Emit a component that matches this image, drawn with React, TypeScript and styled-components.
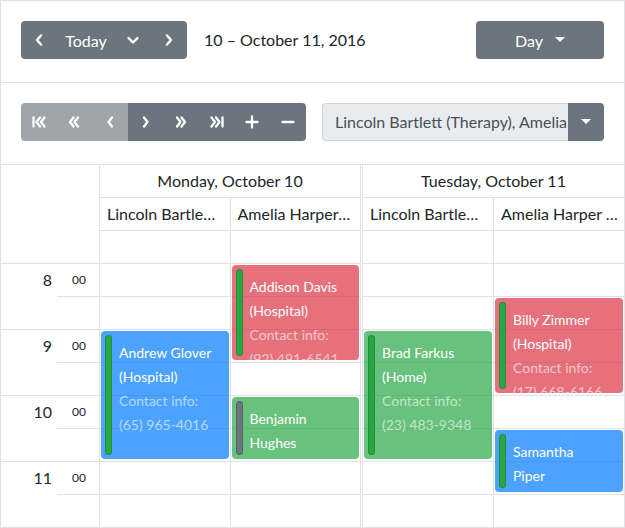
import React from 'react'
import styled, { createGlobalStyle } from 'styled-components'

const LINE = '#dee2e6'
const SLOT = 33
const START_HOUR = 8

const GlobalStyle = createGlobalStyle`
  body {
    margin: 0;
    font-family: Lato, "Open Sans", sans-serif;
    color: #212529;
    background: #fff;
  }
`

const Frame = styled.div`
  width: 625px;
  height: 528px;
  box-sizing: border-box;
  border: 1px solid ${LINE};
  overflow: hidden;
`

const Toolbar = styled.div`
  display: flex;
  justify-content: space-between;
  align-items: flex-start;
  height: 82px;
  box-sizing: border-box;
  padding: 20px 20px 0;
  border-bottom: 1px solid ${LINE};
`

const ToolbarSide = styled.div`
  display: flex;
  align-items: center;
`

const ButtonGroup = styled.div`
  display: flex;
  border-radius: 4px;
  overflow: hidden;
`

const Button = styled.button<{ $w: number; $disabled?: boolean }>`
  width: ${p => p.$w}px;
  height: 38px;
  padding: 0;
  border: none;
  background: #6c757d;
  color: #fff;
  opacity: ${p => (p.$disabled ? 0.65 : 1)};
  display: flex;
  align-items: center;
  justify-content: center;
  font-family: inherit;
  font-size: 16px;
`

const DateLabel = styled.span`
  margin-left: 17px;
  font-size: 16px;
  line-height: 38px;
`

const ViewButton = styled.button`
  width: 128px;
  height: 38px;
  border: none;
  border-radius: 4px;
  background: #6c757d;
  color: #fff;
  display: flex;
  align-items: center;
  justify-content: center;
  gap: 12px;
  font-family: inherit;
  font-size: 16px;
  padding: 0;
`

const Select = styled.div`
  display: flex;
  width: 282px;
  height: 38px;
`

const SelectField = styled.div`
  flex: 1;
  min-width: 0;
  box-sizing: border-box;
  background: #e9ecef;
  border: 1px solid #ced4da;
  border-right: none;
  border-radius: 4px 0 0 4px;
  padding: 0 12px;
  font-size: 16px;
  line-height: 36px;
  color: #495057;
  white-space: nowrap;
  overflow: hidden;
`

const SelectToggle = styled.div`
  width: 36px;
  background: #6c757d;
  border-radius: 0 4px 4px 0;
  display: flex;
  align-items: center;
  justify-content: center;
`

const Schedule = styled.div`
  display: flex;
`

const TimeColumn = styled.div`
  width: 99px;
  flex: none;
  box-sizing: border-box;
  border-right: 1px solid ${LINE};
`

const TimeHeader = styled.div`
  height: 99px;
  box-sizing: border-box;
  border-bottom: 1px solid ${LINE};
`

const HourRow = styled.div`
  display: flex;
  height: 66px;
  box-sizing: border-box;
  border-bottom: 1px solid ${LINE};
`

const HourLabel = styled.div`
  width: 56px;
  box-sizing: border-box;
  padding-right: 5px;
  text-align: right;
  font-size: 16px;
  line-height: 32px;
`

const HalfHours = styled.div`
  flex: 1;
`

const HalfHour = styled.div<{ $line?: boolean }>`
  height: 33px;
  box-sizing: border-box;
  border-bottom: ${p => (p.$line ? `1px solid ${LINE}` : 'none')};
  padding-left: 15px;
  font-size: 12px;
  line-height: 32px;
`

const DayGroup = styled.div<{ $first?: boolean }>`
  box-sizing: border-box;
  min-width: 0;
  ${p =>
    p.$first
      ? `flex: none; width: 261px; border-right: 1px solid ${LINE};`
      : `flex: 1; margin-left: 1px; border-left: 1px solid ${LINE};`}
`

const DayTitle = styled.div`
  height: 33px;
  box-sizing: border-box;
  border-bottom: 1px solid ${LINE};
  text-align: center;
  font-size: 16px;
  line-height: 32px;
`

const Row = styled.div`
  display: flex;
  height: 33px;
  box-sizing: border-box;
  border-bottom: 1px solid ${LINE};
`

const Cell = styled.div<{ $divider?: boolean }>`
  flex: 1 1 0;
  min-width: 0;
  padding: 0 6px 0 7px;
  border-left: ${p => (p.$divider ? `1px solid ${LINE}` : 'none')};
  font-size: 16px;
  line-height: 32px;
  white-space: nowrap;
  overflow: hidden;
  text-overflow: ellipsis;
`

const Body = styled.div`
  display: flex;
`

const ResourceColumn = styled.div<{ $divider?: boolean }>`
  flex: 1 1 0;
  min-width: 0;
  position: relative;
  border-left: ${p => (p.$divider ? `1px solid ${LINE}` : 'none')};
`

const Slot = styled.div`
  height: 33px;
  box-sizing: border-box;
  border-bottom: 1px solid ${LINE};
`

const Appointment = styled.div<{ $bg: string }>`
  position: absolute;
  left: 1px;
  right: 1px;
  box-sizing: border-box;
  padding: 10px 6px 0 18px;
  border-radius: 4px;
  background: ${p => p.$bg};
  overflow: hidden;
  font-size: 14px;
  line-height: 24px;
`

const Bar = styled.div<{ $color: string }>`
  position: absolute;
  left: 4px;
  top: 4px;
  bottom: 4px;
  width: 7px;
  box-sizing: border-box;
  border-radius: 4px;
  background: ${p => p.$color};
  border: 1px solid rgba(0, 0, 0, 0.15);
`

const TitleLine = styled.div`
  color: #fff;
  white-space: nowrap;
`

const InfoLine = styled.div`
  color: rgba(255, 255, 255, 0.6);
  white-space: nowrap;
`

const Chevron = ({ dir }: { dir: 'left' | 'right' | 'down' }) => {
  const d =
    dir === 'left' ? 'M10 3.5 L6 8 L10 12.5' : dir === 'right' ? 'M6 3.5 L10 8 L6 12.5' : 'M3.5 6 L8 10.5 L12.5 6'
  return (
    <svg width="16" height="16" viewBox="0 0 16 16">
      <path d={d} fill="none" stroke="#fff" strokeWidth="2.4" strokeLinecap="round" strokeLinejoin="round" />
    </svg>
  )
}

const NavIcon = ({ d }: { d: string }) => (
  <svg width="16" height="16" viewBox="0 0 16 16">
    <path d={d} fill="none" stroke="#fff" strokeWidth="2.3" strokeLinecap="round" strokeLinejoin="round" />
  </svg>
)

const Caret = () => (
  <svg width="10" height="6" viewBox="0 0 10 6">
    <polygon points="0,0 10,0 5,5" fill="#fff" />
  </svg>
)

const navIcons = [
  { d: 'M2.5 3.5 V12.5 M9 3.5 L5.5 8 L9 12.5 M13.5 3.5 L10 8 L13.5 12.5', disabled: true },
  { d: 'M7.5 3.5 L4 8 L7.5 12.5 M12 3.5 L8.5 8 L12 12.5', disabled: true },
  { d: 'M10 3.5 L6.5 8 L10 12.5', disabled: true },
  { d: 'M6 3.5 L9.5 8 L6 12.5' },
  { d: 'M4 3.5 L7.5 8 L4 12.5 M8.5 3.5 L12 8 L8.5 12.5' },
  { d: 'M2.5 3.5 L6 8 L2.5 12.5 M7 3.5 L10.5 8 L7 12.5 M13.5 3.5 V12.5' },
  { d: 'M8 2.5 V13.5 M2.5 8 H13.5' },
  { d: 'M2.5 8 H13.5' },
]

const days = ['Monday, October 10', 'Tuesday, October 11']
const resources = ['Lincoln Bartlett (Therapy)', 'Amelia Harper (Hospital)']
const hours = [8, 9, 10, 11]

const BLUE = 'rgba(0, 123, 255, 0.7)'
const RED = 'rgba(220, 53, 69, 0.7)'
const GREEN = 'rgba(40, 167, 69, 0.7)'

type Appt = {
  day: number
  res: number
  start: number
  end: number
  bg: string
  bar: string
  title: string[]
  info?: string[]
}

const appointments: Appt[] = [
  { day: 0, res: 0, start: 9, end: 11, bg: BLUE, bar: '#28a745', title: ['Andrew Glover', '(Hospital)'], info: ['Contact info:', '(65) 965-4016'] },
  { day: 0, res: 1, start: 8, end: 9.5, bg: RED, bar: '#28a745', title: ['Addison Davis', '(Hospital)'], info: ['Contact info:', '(92) 491-6541'] },
  { day: 0, res: 1, start: 10, end: 11, bg: GREEN, bar: '#6c757d', title: ['Benjamin', 'Hughes'] },
  { day: 1, res: 0, start: 9, end: 11, bg: GREEN, bar: '#28a745', title: ['Brad Farkus', '(Home)'], info: ['Contact info:', '(23) 483-9348'] },
  { day: 1, res: 1, start: 8.5, end: 10, bg: RED, bar: '#28a745', title: ['Billy Zimmer', '(Hospital)'], info: ['Contact info:', '(17) 668-6166'] },
  { day: 1, res: 1, start: 10.5, end: 11.5, bg: BLUE, bar: '#28a745', title: ['Samantha', 'Piper'] },
]

export default function App() {
  return (
    <>
      <GlobalStyle />
      <Frame>
        <Toolbar>
          <ToolbarSide>
            <ButtonGroup>
              <Button $w={36}><Chevron dir="left" /></Button>
              <Button $w={58}>Today</Button>
              <Button $w={36}><Chevron dir="down" /></Button>
              <Button $w={36}><Chevron dir="right" /></Button>
            </ButtonGroup>
            <DateLabel>10 – October 11, 2016</DateLabel>
          </ToolbarSide>
          <ViewButton>
            Day
            <Caret />
          </ViewButton>
        </Toolbar>

        <Toolbar>
          <ButtonGroup>
            {navIcons.map((icon, i) => (
              <Button key={i} $w={35.6} $disabled={icon.disabled}>
                <NavIcon d={icon.d} />
              </Button>
            ))}
          </ButtonGroup>
          <Select>
            <SelectField>Lincoln Bartlett (Therapy), Amelia Harper (Hospital)</SelectField>
            <SelectToggle><Caret /></SelectToggle>
          </Select>
        </Toolbar>

        <Schedule>
          <TimeColumn>
            <TimeHeader />
            {hours.map(h => (
              <HourRow key={h}>
                <HourLabel>{h}</HourLabel>
                <HalfHours>
                  <HalfHour $line>00</HalfHour>
                  <HalfHour />
                </HalfHours>
              </HourRow>
            ))}
          </TimeColumn>

          {days.map((day, di) => (
            <DayGroup key={day} $first={di === 0}>
              <DayTitle>{day}</DayTitle>
              <Row>
                {resources.map((r, ri) => (
                  <Cell key={r} $divider={ri > 0}>{r}</Cell>
                ))}
              </Row>
              <Row>
                {resources.map((r, ri) => (
                  <Cell key={r} $divider={ri > 0} />
                ))}
              </Row>
              <Body>
                {resources.map((r, ri) => (
                  <ResourceColumn key={r} $divider={ri > 0}>
                    {Array.from({ length: hours.length * 2 }, (_, si) => (
                      <Slot key={si} />
                    ))}
                    {appointments
                      .filter(a => a.day === di && a.res === ri)
                      .map(a => (
                        <Appointment
                          key={a.title.join(' ')}
                          $bg={a.bg}
                          style={{
                            top: (a.start - START_HOUR) * 2 * SLOT + 1,
                            height: (a.end - a.start) * 2 * SLOT - 4,
                          }}
                        >
                          <Bar $color={a.bar} />
                          {a.title.map(t => (
                            <TitleLine key={t}>{t}</TitleLine>
                          ))}
                          {a.info?.map(t => (
                            <InfoLine key={t}>{t}</InfoLine>
                          ))}
                        </Appointment>
                      ))}
                  </ResourceColumn>
                ))}
              </Body>
            </DayGroup>
          ))}
        </Schedule>
      </Frame>
    </>
  )
}
